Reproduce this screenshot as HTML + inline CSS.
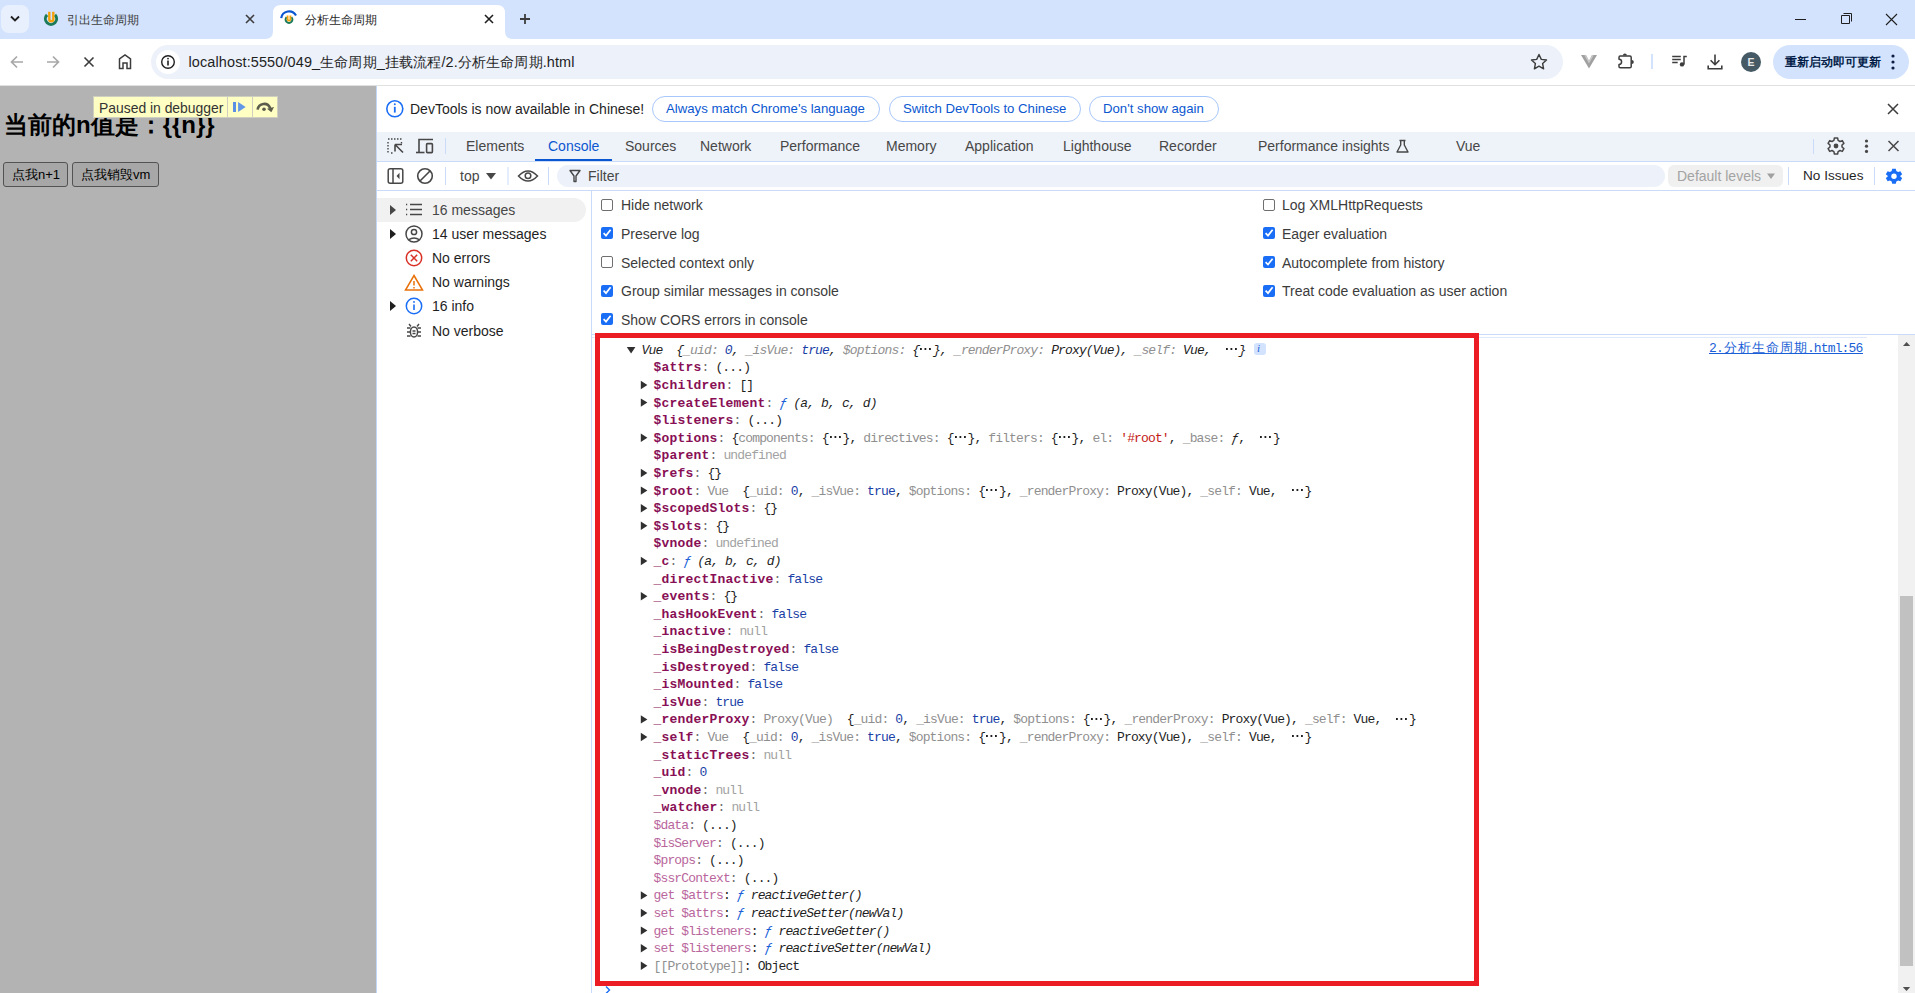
<!DOCTYPE html>
<html><head><meta charset="utf-8">
<style>
*{box-sizing:border-box;margin:0;padding:0}
html,body{width:1915px;height:993px;overflow:hidden;background:#fff;font-family:"Liberation Sans",sans-serif;color:#1f1f1f;position:relative}
.a{position:absolute}
svg{position:absolute;overflow:visible}
.t{position:absolute;white-space:pre;line-height:1}
.ui{font-size:14px;color:#1f1f1f}
.row{position:absolute;white-space:pre;font-family:"Liberation Mono",monospace;font-size:13px;line-height:17.6px;height:17.6px;color:#1f1f1f}
.cj{display:inline-block;width:14px;text-align:center}
</style></head><body>
<!-- ===== TAB STRIP ===== -->
<div class="a" style="left:0;top:0;width:1915px;height:39px;background:#d3e3fd"></div>
<div class="a" style="left:1px;top:5px;width:28px;height:28px;border-radius:8px;background:#e9f0fd"></div>
<svg style="left:0;top:0" width="40" height="40"><path d="M11 16.5 L15 20.5 L19 16.5" fill="none" stroke="#1f1f1f" stroke-width="1.8"/></svg>
<!-- inactive tab favicon -->
<svg style="left:0;top:0" width="70" height="40">
  <path d="M47.04 14.84 A5.6 5.6 0 1 0 54.96 14.84" fill="none" stroke="#1b7a58" stroke-width="3"/>
  <path d="M49.3 11.7 V19.2 A2 2 0 0 0 53.3 19.2 V11.7" fill="none" stroke="#f5a20a" stroke-width="2.4"/>
</svg>
<div class="t" style="left:67px;top:13.5px;font-size:12px;color:#3c3c3c">引出生命周期</div>
<svg style="left:0;top:0" width="300" height="40"><path d="M246 15 L254 23 M254 15 L246 23" stroke="#3c3c3c" stroke-width="1.6"/></svg>
<!-- active tab -->
<svg style="left:0;top:0" width="600" height="40">
  <path d="M265 39 Q273 39 273 31 L273 13 Q273 5 281 5 L497 5 Q505 5 505 13 L505 31 Q505 39 513 39 Z" fill="#fff"/>
  <path d="M281.2 18.2 A7.9 7.9 0 0 1 296 15.6" fill="none" stroke="#0b57d0" stroke-width="2.2"/>
  <path d="M286.6 17.1 A3.4 3.4 0 1 0 291.4 17.1" fill="none" stroke="#1b7a58" stroke-width="2"/>
  <path d="M287.6 15.5 V19.2 A1.4 1.4 0 0 0 290.4 19.2 V15.5" fill="none" stroke="#f5a20a" stroke-width="1.8"/>
  <path d="M485 15 L493 23 M493 15 L485 23" stroke="#1f1f1f" stroke-width="1.6"/>
  <path d="M520 19 L530 19 M525 14 L525 24" stroke="#3c3c3c" stroke-width="1.8"/>
</svg>
<div class="t" style="left:305px;top:13.5px;font-size:12px;color:#1f1f1f">分析生命周期</div>
<!-- window controls -->
<svg style="left:0;top:0" width="1915" height="40">
  <path d="M1795 19.5 H1806" stroke="#1f1f1f" stroke-width="1"/>
  <path d="M1841.5 15.5 H1849.5 V23.5 H1841.5 Z" fill="none" stroke="#1f1f1f" stroke-width="1"/>
  <path d="M1843.5 13.5 H1851.5 V21.5" fill="none" stroke="#1f1f1f" stroke-width="1"/>
  <path d="M1886 14 L1897 25 M1897 14 L1886 25" stroke="#1f1f1f" stroke-width="1.1"/>
</svg>
<!-- ===== TOOLBAR ===== -->
<div class="a" style="left:0;top:39px;width:1915px;height:47px;background:#fff;border-bottom:1px solid #e0e2e0"></div>
<svg style="left:0;top:0" width="160" height="90">
  <path d="M23 62 H12 M17 56.5 L11.5 62 L17 67.5" fill="none" stroke="#a8a8a8" stroke-width="1.7"/>
  <path d="M47 62 H58 M53 56.5 L58.5 62 L53 67.5" fill="none" stroke="#a8a8a8" stroke-width="1.7"/>
  <path d="M84.5 57.5 L93.5 66.5 M93.5 57.5 L84.5 66.5" stroke="#3c3c3c" stroke-width="1.6"/>
  <path d="M119.5 68.5 V59 L125 55 L130.5 59 V68.5 H127 V63 H123 V68.5 Z" fill="none" stroke="#3c3c3c" stroke-width="1.5" stroke-linejoin="miter"/>
</svg>
<div class="a" style="left:151px;top:45px;width:1412px;height:34px;border-radius:17px;background:#ecf1fa"></div>
<div class="a" style="left:156px;top:50px;width:24px;height:24px;border-radius:12px;background:#fff"></div>
<svg style="left:0;top:0" width="200" height="90">
  <circle cx="168" cy="62" r="6.3" fill="none" stroke="#1f1f1f" stroke-width="1.4"/>
  <path d="M168 60.5 V65.5" stroke="#1f1f1f" stroke-width="1.6"/>
  <circle cx="168" cy="58.6" r="0.9" fill="#1f1f1f"/>
</svg>
<div class="t" style="left:188.5px;top:54.5px;font-size:14.45px;letter-spacing:0.13px;color:#1f1f1f">localhost:5550/049_生命周期_挂载流程/2.分析生命周期.html</div>
<svg style="left:0;top:0" width="1915" height="90">
  <path d="M1539 54.5 L1541.3 59.4 L1546.5 60 L1542.6 63.5 L1543.6 68.8 L1539 66.2 L1534.4 68.8 L1535.4 63.5 L1531.5 60 L1536.7 59.4 Z" fill="none" stroke="#3c3c3c" stroke-width="1.4" stroke-linejoin="round"/>
  <path d="M1581 55 H1586 L1589 61 L1592 55 H1597 L1589 68.5 Z" fill="#a0a0a0"/>
  <path d="M1585 55 L1589 62 L1593 55" fill="none" stroke="#c8c8c8" stroke-width="1.5"/>
  <path d="M1620.2 56 H1629.8 Q1631.2 56 1631.2 57.4 V66.4 Q1631.2 67.8 1629.8 67.8 H1620.2 Q1619 67.8 1619 66.4 V64.4 A2.6 2.6 0 0 0 1619 59.2 V57.4 Q1619 56 1620.2 56 Z" fill="none" stroke="#3c3c3c" stroke-width="1.5" stroke-linejoin="round"/>
  <path d="M1622.9 55.4 A2 2 0 0 1 1626.9 55.4 Z" fill="#3c3c3c"/>
  <path d="M1631.8 59.9 A2 2 0 0 1 1631.8 63.9 Z" fill="#3c3c3c"/>
  <path d="M1652 54 V69" stroke="#a8c7fa" stroke-width="1"/>
  <path d="M1672.2 56.6 H1680.8 M1672.2 59.6 H1680.8 M1672.2 62.6 H1677.7" stroke="#3c3c3c" stroke-width="1.5"/>
  <path d="M1684 64.4 V56.6 H1686.8" fill="none" stroke="#3c3c3c" stroke-width="1.5"/>
  <circle cx="1682" cy="64.4" r="2.2" fill="#3c3c3c"/>
  <path d="M1715 54.4 V64.5 M1710.6 60.3 L1715 64.7 L1719.4 60.3 M1708.2 65.5 V68.7 H1721.8 V65.5" fill="none" stroke="#3c3c3c" stroke-width="1.6"/>
  <circle cx="1751" cy="62" r="10" fill="#455a64"/>
</svg>
<div class="t" style="left:1747.5px;top:57px;font-size:10.5px;font-weight:bold;color:#e6e6e6">E</div>
<div class="a" style="left:1773px;top:45px;width:136px;height:34px;border-radius:17px;background:#d3e3fd"></div>
<div class="t" style="left:1785px;top:56px;font-size:12px;font-weight:bold;color:#041e49">重新启动即可更新</div>
<svg style="left:0;top:0" width="1915" height="90">
  <circle cx="1893" cy="56" r="1.6" fill="#0b1d45"/><circle cx="1893" cy="62" r="1.6" fill="#0b1d45"/><circle cx="1893" cy="68" r="1.6" fill="#0b1d45"/>
</svg>
<!-- ===== PAGE (left) ===== -->
<div class="a" style="left:0;top:86px;width:376px;height:907px;background:#b3b3b3"></div>
<div class="t" style="left:4px;top:113px;font-size:24px;font-weight:bold;color:#000">当前的n值是：{{n}}</div>
<div class="a" style="left:3px;top:162px;width:65px;height:25px;border:1px solid #535353;border-radius:3px;background:#a7a7a7"></div>
<div class="t" style="left:12px;top:168px;font-size:13px;color:#000">点我n+1</div>
<div class="a" style="left:72px;top:162px;width:87px;height:25px;border:1px solid #535353;border-radius:3px;background:#a7a7a7"></div>
<div class="t" style="left:81px;top:168px;font-size:13px;color:#000">点我销毁vm</div>
<div class="a" style="left:93px;top:96px;width:185px;height:22px;background:#ffffc4;border:1px solid #cfcfc0"></div>
<div class="a" style="left:227px;top:96px;width:1px;height:22px;background:#cfcfc0"></div>
<div class="a" style="left:252px;top:96px;width:1px;height:22px;background:#cfcfc0"></div>
<div class="t" style="left:99px;top:101.5px;font-size:13.9px;color:#333">Paused in debugger</div>
<svg style="left:0;top:0" width="300" height="130">
  <rect x="233" y="102" width="3" height="10" fill="#5b90e4"/>
  <path d="M238.1 102 L245.6 107 L238.1 112 Z" fill="#6197e6"/>
  <path d="M257.6 109.6 A6.6 6.9 0 0 1 270.2 108.2" fill="none" stroke="#5c5c4c" stroke-width="2.6"/>
  <path d="M267 108.8 L274 107 L271.4 112.2 Z" fill="#5c5c4c"/>
  <circle cx="264" cy="109.3" r="1.8" fill="#5c5c4c"/>
</svg>
<!-- ===== DEVTOOLS ===== -->
<div class="a" style="left:376px;top:86px;width:1539px;height:907px;background:#fff"></div>
<div class="a" style="left:376px;top:86px;width:1px;height:907px;background:#c2d6f7"></div>
<!-- banner -->
<svg style="left:0;top:0" width="420" height="130">
  <circle cx="394.8" cy="108.8" r="8" fill="none" stroke="#1a6ef5" stroke-width="1.6"/>
  <path d="M394.8 106.8 V112.6" stroke="#1a6ef5" stroke-width="1.8"/>
  <circle cx="394.8" cy="104.3" r="1" fill="#1a6ef5"/>
</svg>
<div class="t ui" style="left:410px;top:102px;font-size:14px">DevTools is now available in Chinese!</div>
<div class="a" style="left:652px;top:96px;width:228px;height:26px;border:1px solid #a8c7fa;border-radius:13px"></div>
<div class="t" style="left:666px;top:102px;font-size:13.2px;color:#0b57d0">Always match Chrome's language</div>
<div class="a" style="left:889px;top:96px;width:192px;height:26px;border:1px solid #a8c7fa;border-radius:13px"></div>
<div class="t" style="left:903px;top:102px;font-size:13.2px;color:#0b57d0">Switch DevTools to Chinese</div>
<div class="a" style="left:1089px;top:96px;width:130px;height:26px;border:1px solid #a8c7fa;border-radius:13px"></div>
<div class="t" style="left:1103px;top:102px;font-size:13.2px;color:#0b57d0">Don't show again</div>
<svg style="left:0;top:0" width="1915" height="130"><path d="M1888 104 L1898 114 M1898 104 L1888 114" stroke="#3c3c3c" stroke-width="1.5"/></svg>
<!-- main tab bar -->
<div class="a" style="left:377px;top:132px;width:1538px;height:30px;background:#eef2f9;border-bottom:1px solid #c9dbf8"></div>
<div class="a" style="left:535px;top:159px;width:77px;height:2px;background:#0b57d0"></div>
<div class="t ui" style="left:466px;top:139px;color:#474747">Elements</div>
<div class="t ui" style="left:548px;top:139px;color:#0b57d0">Console</div>
<div class="t ui" style="left:625px;top:139px;color:#474747">Sources</div>
<div class="t ui" style="left:700px;top:139px;color:#474747">Network</div>
<div class="t ui" style="left:780px;top:139px;color:#474747">Performance</div>
<div class="t ui" style="left:886px;top:139px;color:#474747">Memory</div>
<div class="t ui" style="left:965px;top:139px;color:#474747">Application</div>
<div class="t ui" style="left:1063px;top:139px;color:#474747">Lighthouse</div>
<div class="t ui" style="left:1159px;top:139px;color:#474747">Recorder</div>
<div class="t ui" style="left:1258px;top:139px;color:#474747">Performance insights</div>
<div class="t ui" style="left:1456px;top:139px;color:#474747">Vue</div>
<svg style="left:0;top:0" width="1915" height="200">
  <!-- inspect -->
  <path d="M388 139 h1.5 M391 139 h1.5 M394 139 h1.5 M397 139 h1.5 M400 139 h1.5 M388 142 v1.5 M388 145 v1.5 M388 148 v1.5 M388 151 v1.5 M401.5 142 v1.5 M391 153 h1.5" stroke="#474747" stroke-width="1.4"/>
  <path d="M395 144.5 H402 M395 144.5 V151.5 M395.5 145 L403 152.5" fill="none" stroke="#474747" stroke-width="1.6"/>
  <!-- device -->
  <path d="M419 153 V139.5 H433" fill="none" stroke="#474747" stroke-width="1.6"/>
  <path d="M416 152.5 H424.5" stroke="#474747" stroke-width="1.6"/>
  <rect x="426.6" y="143.6" width="5.8" height="9" rx="0.8" fill="none" stroke="#474747" stroke-width="1.6"/>
  <path d="M445.5 138 V154" stroke="#c9dbf8" stroke-width="1"/>
  <!-- flask -->
  <path d="M1399.5 140.5 H1405.5 M1400.7 140.5 V145 L1397 152 H1408 L1404.3 145 V140.5" fill="none" stroke="#474747" stroke-width="1.4" stroke-linejoin="round"/>
  <path d="M1813.5 139 V154" stroke="#c9dbf8" stroke-width="1"/>
  <!-- gear -->
  <g transform="translate(1836,146)">
    <path d="M-1.6 -8 H1.6 L2.1 -5.6 L4 -4.5 L6.3 -5.4 L7.9 -2.6 L6 -1 V1 L7.9 2.6 L6.3 5.4 L4 4.5 L2.1 5.6 L1.6 8 H-1.6 L-2.1 5.6 L-4 4.5 L-6.3 5.4 L-7.9 2.6 L-6 1 V-1 L-7.9 -2.6 L-6.3 -5.4 L-4 -4.5 L-2.1 -5.6 Z" fill="none" stroke="#474747" stroke-width="1.5" stroke-linejoin="round"/>
    <circle cx="0" cy="0" r="2.4" fill="#474747"/>
  </g>
  <circle cx="1866.5" cy="141" r="1.6" fill="#474747"/><circle cx="1866.5" cy="146.2" r="1.6" fill="#474747"/><circle cx="1866.5" cy="151.4" r="1.6" fill="#474747"/>
  <path d="M1888.5 141 L1898.5 151 M1898.5 141 L1888.5 151" stroke="#474747" stroke-width="1.5"/>
</svg>
<!-- console toolbar -->
<div class="a" style="left:557px;top:165px;width:1108px;height:22px;border-radius:11px;background:#edf2fa"></div>
<div class="a" style="left:1668px;top:165px;width:115px;height:22px;border-radius:6px;background:#f0f0f0"></div>
<div class="a" style="left:377px;top:190px;width:1538px;height:1px;background:#c9dbf8"></div>
<svg style="left:0;top:0" width="1915" height="200">
  <rect x="388.2" y="168.7" width="14.6" height="14.6" rx="2" fill="none" stroke="#474747" stroke-width="1.5"/>
  <path d="M393 169 V183" stroke="#474747" stroke-width="1.5"/>
  <path d="M399.5 172.8 L396.5 176 L399.5 179.2 Z" fill="#474747"/>
  <circle cx="425" cy="176" r="7.3" fill="none" stroke="#474747" stroke-width="1.6"/>
  <path d="M430 171 L420 181" stroke="#474747" stroke-width="1.6"/>
  <path d="M445.5 167 V185 M508 167 V185 M548.5 167 V185" stroke="#c9dbf8" stroke-width="1"/>
  <path d="M486 173 H496 L491 179.5 Z" fill="#474747"/>
  <path d="M518.5 176 Q528 166 537.5 176 Q528 186 518.5 176 Z" fill="none" stroke="#474747" stroke-width="1.5"/>
  <circle cx="528" cy="175.8" r="2.8" fill="none" stroke="#474747" stroke-width="1.5"/>
  <path d="M570 170.5 H580 L576 176 V181.5 H574 V176 Z" fill="none" stroke="#474747" stroke-width="1.4" stroke-linejoin="round"/>
  <path d="M1788.5 167 V185 M1874.5 167 V185" stroke="#c9dbf8" stroke-width="1"/>
  <path d="M1767 173.5 H1775 L1771 179 Z" fill="#a0a0a0"/>
</svg>
<div class="t ui" style="left:460px;top:169px;color:#474747">top</div>
<div class="t ui" style="left:588px;top:169px;color:#474747">Filter</div>
<div class="t ui" style="left:1677px;top:169px;color:#a3a3a3">Default levels</div>
<div class="t ui" style="left:1803px;top:169px;font-size:13.6px;color:#1f1f1f">No Issues</div>
<svg style="left:0;top:0" width="1915" height="200">
  <g transform="translate(1894,176.2)">
    <path d="M-2 -8.3 H2 L2.6 -5.8 L4.6 -4.7 L7.1 -5.5 L9.1 -2.1 L7.1 -0.6 V0.6 L9.1 2.1 L7.1 5.5 L4.6 4.7 L2.6 5.8 L2 8.3 H-2 L-2.6 5.8 L-4.6 4.7 L-7.1 5.5 L-9.1 2.1 L-7.1 0.6 V-0.6 L-9.1 -2.1 L-7.1 -5.5 L-4.6 -4.7 L-2.6 -5.8 Z" fill="#1a6ef5" transform="scale(0.9)"/>
    <circle cx="0" cy="0" r="2.7" fill="#fff"/>
  </g>
</svg>
<!-- sidebar -->
<div class="a" style="left:591px;top:191px;width:1px;height:802px;background:#c9dbf8"></div>
<div class="a" style="left:377px;top:198px;width:209px;height:24px;border-radius:0 12px 12px 0;background:#f1f1f1"></div>
<div class="t ui" style="left:432px;top:203px;color:#474747">16 messages</div>
<div class="t ui" style="left:432px;top:227px;color:#1f1f1f">14 user messages</div>
<div class="t ui" style="left:432px;top:251px;color:#1f1f1f">No errors</div>
<div class="t ui" style="left:432px;top:275px;color:#1f1f1f">No warnings</div>
<div class="t ui" style="left:432px;top:299px;color:#1f1f1f">16 info</div>
<div class="t ui" style="left:432px;top:324px;color:#1f1f1f">No verbose</div>
<svg style="left:0;top:0" width="600" height="350">
  <path d="M390 205 L396 210 L390 215 Z" fill="#474747"/>
  <path d="M390 229 L396 234 L390 239 Z" fill="#1f1f1f"/>
  <path d="M390 301 L396 306 L390 311 Z" fill="#1f1f1f"/>
  <path d="M406 204.5 h1.2 M406 209.5 h1.2 M406 214.5 h1.2 M410 204.5 H422 M410 209.5 H422 M410 214.5 H422" stroke="#474747" stroke-width="1.6"/>
  <circle cx="414" cy="234" r="8" fill="none" stroke="#474747" stroke-width="1.5"/>
  <circle cx="414" cy="232" r="2.6" fill="none" stroke="#474747" stroke-width="1.5"/>
  <path d="M408.5 239.8 Q414 236.2 419.5 239.8" fill="none" stroke="#474747" stroke-width="1.5"/>
  <circle cx="414" cy="258" r="7.7" fill="none" stroke="#d93025" stroke-width="1.5"/>
  <path d="M410.8 254.8 L417.2 261.2 M417.2 254.8 L410.8 261.2" stroke="#d93025" stroke-width="1.5"/>
  <path d="M414 275.5 L422.5 290 H405.5 Z" fill="none" stroke="#e8710a" stroke-width="1.5" stroke-linejoin="miter"/>
  <path d="M414 281 V285.5 M414 287 V288.5" stroke="#e8710a" stroke-width="1.5"/>
  <circle cx="414" cy="306" r="7.7" fill="none" stroke="#1a6ef5" stroke-width="1.5"/>
  <path d="M414 304.5 V310" stroke="#1a6ef5" stroke-width="1.6"/>
  <circle cx="414" cy="302" r="0.9" fill="#1a6ef5"/>
  <ellipse cx="414" cy="332" rx="3.6" ry="5" fill="none" stroke="#474747" stroke-width="1.5"/>
  <path d="M412.5 331 h3 M412.5 333.5 h3 M407 328 h3.5 M407 332 h3.5 M407 336 h3.5 M417.5 328 h3.5 M417.5 332 h3.5 M417.5 336 h3.5 M411 326.5 L409 324 M417 326.5 L419 324" stroke="#474747" stroke-width="1.4"/>
</svg>
<div class="a" style="left:601px;top:198.8px;width:12px;height:12px;border-radius:2px;border:1px solid #6f6f6f;background:#fff"></div>
<div class="t ui" style="left:621px;top:198.4px;color:#3c3c3c">Hide network</div>
<div class="a" style="left:601px;top:227px;width:12px;height:12px;border-radius:2px;background:#1a6ef5"></div><svg style="left:0;top:0" width="1" height="1"><path d="M603.6 233.2 L606 235.6 L610.6 229.8" fill="none" stroke="#fff" stroke-width="1.7"/></svg>
<div class="t ui" style="left:621px;top:226.6px;color:#3c3c3c">Preserve log</div>
<div class="a" style="left:601px;top:255.89999999999998px;width:12px;height:12px;border-radius:2px;border:1px solid #6f6f6f;background:#fff"></div>
<div class="t ui" style="left:621px;top:255.5px;color:#3c3c3c">Selected context only</div>
<div class="a" style="left:601px;top:284.5px;width:12px;height:12px;border-radius:2px;background:#1a6ef5"></div><svg style="left:0;top:0" width="1" height="1"><path d="M603.6 290.7 L606 293.1 L610.6 287.3" fill="none" stroke="#fff" stroke-width="1.7"/></svg>
<div class="t ui" style="left:621px;top:284.1px;color:#3c3c3c">Group similar messages in console</div>
<div class="a" style="left:601px;top:313px;width:12px;height:12px;border-radius:2px;background:#1a6ef5"></div><svg style="left:0;top:0" width="1" height="1"><path d="M603.6 319.2 L606 321.6 L610.6 315.8" fill="none" stroke="#fff" stroke-width="1.7"/></svg>
<div class="t ui" style="left:621px;top:312.6px;color:#3c3c3c">Show CORS errors in console</div>
<div class="a" style="left:1263px;top:198.8px;width:12px;height:12px;border-radius:2px;border:1px solid #6f6f6f;background:#fff"></div>
<div class="t ui" style="left:1282px;top:198.4px;color:#3c3c3c">Log XMLHttpRequests</div>
<div class="a" style="left:1263px;top:227px;width:12px;height:12px;border-radius:2px;background:#1a6ef5"></div><svg style="left:0;top:0" width="1" height="1"><path d="M1265.6 233.2 L1268 235.6 L1272.6 229.8" fill="none" stroke="#fff" stroke-width="1.7"/></svg>
<div class="t ui" style="left:1282px;top:226.6px;color:#3c3c3c">Eager evaluation</div>
<div class="a" style="left:1263px;top:255.89999999999998px;width:12px;height:12px;border-radius:2px;background:#1a6ef5"></div><svg style="left:0;top:0" width="1" height="1"><path d="M1265.6 262.09999999999997 L1268 264.5 L1272.6 258.7" fill="none" stroke="#fff" stroke-width="1.7"/></svg>
<div class="t ui" style="left:1282px;top:255.5px;color:#3c3c3c">Autocomplete from history</div>
<div class="a" style="left:1263px;top:284.5px;width:12px;height:12px;border-radius:2px;background:#1a6ef5"></div><svg style="left:0;top:0" width="1" height="1"><path d="M1265.6 290.7 L1268 293.1 L1272.6 287.3" fill="none" stroke="#fff" stroke-width="1.7"/></svg>
<div class="t ui" style="left:1282px;top:284.1px;color:#3c3c3c">Treat code evaluation as user action</div>
<!-- console message area frame -->
<div class="a" style="left:592px;top:334px;width:1323px;height:1px;background:#c9dbf8"></div>
<div class="a" style="left:592px;top:337px;width:1275px;height:1px;background:#dfe9fb"></div>
<div class="a" style="left:1898px;top:335px;width:17px;height:658px;background:#f1f1f1"></div>
<div class="a" style="left:1900px;top:596px;width:13px;height:370px;background:#c1c1c1"></div>
<svg style="left:0;top:0" width="1915" height="993">
  <path d="M1903 346 L1906.6 342 L1910.2 346 Z" fill="#505050"/>
  <path d="M1902.8 987 L1910.2 987 L1906.5 991 Z" fill="#505050"/>
  <path d="M606 986.5 L609.5 990 L606 993.5" fill="none" stroke="#1a6ef5" stroke-width="1.4"/>
</svg>
<div class="row" style="left:1709px;top:340.2px;color:#1a5fd6;letter-spacing:-0.86px">2.<span class="cj">分</span><span class="cj">析</span><span class="cj">生</span><span class="cj">命</span><span class="cj">周</span><span class="cj">期</span>.html:56</div>
<div class="a" style="left:1709px;top:353px;width:154px;height:1px;background:#1a5fd6"></div>
<div class="a" style="left:1254px;top:343px;width:12px;height:12px;border-radius:3px;background:#d3e3fd"></div>
<div class="t" style="left:1257px;top:343px;font-family:'Liberation Serif',serif;font-style:italic;font-size:11px;color:#1a5fd6">i</div>
<div class="a" style="left:595px;top:333px;width:884px;height:653px;border:5px solid #ec1c24"></div>
<div class="row" style="left:641.5px;top:341.70px"><span style="color:#1f1f1f;letter-spacing:-0.860px;font-style:italic">Vue</span><span style="color:#1f1f1f;letter-spacing:-0.860px">  </span><span style="color:#1f1f1f;letter-spacing:-0.860px;font-style:italic">{</span><span style="color:#8f8f8f;letter-spacing:-0.860px;font-style:italic">_uid</span><span style="color:#8f8f8f;letter-spacing:-0.860px;font-style:italic">: </span><span style="color:#1a3fa6;letter-spacing:-0.860px;font-style:italic">0</span><span style="color:#1f1f1f;letter-spacing:-0.860px;font-style:italic">, </span><span style="color:#8f8f8f;letter-spacing:-0.860px;font-style:italic">_isVue: </span><span style="color:#1a3fa6;letter-spacing:-0.860px;font-style:italic">true</span><span style="color:#1f1f1f;letter-spacing:-0.860px;font-style:italic">, </span><span style="color:#8f8f8f;letter-spacing:-0.860px;font-style:italic">$options: </span><span style="color:#1f1f1f;letter-spacing:-0.860px;font-style:italic">{</span><span style="color:#1f1f1f;display:inline-block;width:13.88px;height:17.6px;vertical-align:top;background:linear-gradient(90deg,#1f1f1f 2px,transparent 2px) 1px 6.6px/4.5px 2px repeat-x"></span><span style="color:#1f1f1f;letter-spacing:-0.860px;font-style:italic">}</span><span style="color:#1f1f1f;letter-spacing:-0.860px;font-style:italic">, </span><span style="color:#8f8f8f;letter-spacing:-0.860px;font-style:italic">_renderProxy: </span><span style="color:#1f1f1f;letter-spacing:-0.860px;font-style:italic">Proxy(Vue)</span><span style="color:#1f1f1f;letter-spacing:-0.860px;font-style:italic">, </span><span style="color:#8f8f8f;letter-spacing:-0.860px;font-style:italic">_self: </span><span style="color:#1f1f1f;letter-spacing:-0.860px;font-style:italic">Vue</span><span style="color:#1f1f1f;letter-spacing:-0.860px;font-style:italic">,  </span><span style="color:#1f1f1f;display:inline-block;width:13.88px;height:17.6px;vertical-align:top;background:linear-gradient(90deg,#1f1f1f 2px,transparent 2px) 1px 6.6px/4.5px 2px repeat-x"></span><span style="color:#1f1f1f;letter-spacing:-0.860px;font-style:italic">}</span></div>
<div class="row" style="left:653.5px;top:359.30px"><span style="color:#880f55;letter-spacing:0.200px;font-weight:bold">$attrs</span><span style="color:#6e6e6e;letter-spacing:-0.860px">: </span><span style="color:#1f1f1f;letter-spacing:-0.860px">(...)</span></div>
<div class="row" style="left:653.5px;top:376.90px"><span style="color:#880f55;letter-spacing:0.200px;font-weight:bold">$children</span><span style="color:#6e6e6e;letter-spacing:-0.860px">: </span><span style="color:#1f1f1f;letter-spacing:-0.860px">[]</span></div>
<div class="row" style="left:653.5px;top:394.50px"><span style="color:#880f55;letter-spacing:0.200px;font-weight:bold">$createElement</span><span style="color:#6e6e6e;letter-spacing:-0.860px">: </span><span style="color:#1a5fd6;letter-spacing:-0.860px;font-style:italic">ƒ</span><span style="color:#1f1f1f;letter-spacing:-0.860px;font-style:italic"> (a, b, c, d)</span></div>
<div class="row" style="left:653.5px;top:412.10px"><span style="color:#880f55;letter-spacing:0.200px;font-weight:bold">$listeners</span><span style="color:#6e6e6e;letter-spacing:-0.860px">: </span><span style="color:#1f1f1f;letter-spacing:-0.860px">(...)</span></div>
<div class="row" style="left:653.5px;top:429.70px"><span style="color:#880f55;letter-spacing:0.200px;font-weight:bold">$options</span><span style="color:#6e6e6e;letter-spacing:-0.860px">: </span><span style="color:#1f1f1f;letter-spacing:-0.860px">{</span><span style="color:#8f8f8f;letter-spacing:-0.860px">components: </span><span style="color:#1f1f1f;letter-spacing:-0.860px">{</span><span style="color:#1f1f1f;display:inline-block;width:13.88px;height:17.6px;vertical-align:top;background:linear-gradient(90deg,#1f1f1f 2px,transparent 2px) 1px 6.6px/4.5px 2px repeat-x"></span><span style="color:#1f1f1f;letter-spacing:-0.860px">}</span><span style="color:#1f1f1f;letter-spacing:-0.860px">, </span><span style="color:#8f8f8f;letter-spacing:-0.860px">directives: </span><span style="color:#1f1f1f;letter-spacing:-0.860px">{</span><span style="color:#1f1f1f;display:inline-block;width:13.88px;height:17.6px;vertical-align:top;background:linear-gradient(90deg,#1f1f1f 2px,transparent 2px) 1px 6.6px/4.5px 2px repeat-x"></span><span style="color:#1f1f1f;letter-spacing:-0.860px">}</span><span style="color:#1f1f1f;letter-spacing:-0.860px">, </span><span style="color:#8f8f8f;letter-spacing:-0.860px">filters: </span><span style="color:#1f1f1f;letter-spacing:-0.860px">{</span><span style="color:#1f1f1f;display:inline-block;width:13.88px;height:17.6px;vertical-align:top;background:linear-gradient(90deg,#1f1f1f 2px,transparent 2px) 1px 6.6px/4.5px 2px repeat-x"></span><span style="color:#1f1f1f;letter-spacing:-0.860px">}</span><span style="color:#1f1f1f;letter-spacing:-0.860px">, </span><span style="color:#8f8f8f;letter-spacing:-0.860px">el: </span><span style="color:#c41a16;letter-spacing:-0.860px">&#x27;#root&#x27;</span><span style="color:#1f1f1f;letter-spacing:-0.860px">, </span><span style="color:#8f8f8f;letter-spacing:-0.860px">_base: </span><span style="color:#1f1f1f;letter-spacing:-0.860px;font-style:italic">ƒ</span><span style="color:#1f1f1f;letter-spacing:-0.860px">,  </span><span style="color:#1f1f1f;display:inline-block;width:13.88px;height:17.6px;vertical-align:top;background:linear-gradient(90deg,#1f1f1f 2px,transparent 2px) 1px 6.6px/4.5px 2px repeat-x"></span><span style="color:#1f1f1f;letter-spacing:-0.860px">}</span></div>
<div class="row" style="left:653.5px;top:447.30px"><span style="color:#880f55;letter-spacing:0.200px;font-weight:bold">$parent</span><span style="color:#6e6e6e;letter-spacing:-0.860px">: </span><span style="color:#a2a2a2;letter-spacing:-0.860px">undefined</span></div>
<div class="row" style="left:653.5px;top:464.90px"><span style="color:#880f55;letter-spacing:0.200px;font-weight:bold">$refs</span><span style="color:#6e6e6e;letter-spacing:-0.860px">: </span><span style="color:#1f1f1f;letter-spacing:-0.860px">{}</span></div>
<div class="row" style="left:653.5px;top:482.50px"><span style="color:#880f55;letter-spacing:0.200px;font-weight:bold">$root</span><span style="color:#6e6e6e;letter-spacing:-0.860px">: </span><span style="color:#8f8f8f;letter-spacing:-0.860px">Vue</span><span style="color:#1f1f1f;letter-spacing:-0.860px">  </span><span style="color:#1f1f1f;letter-spacing:-0.860px">{</span><span style="color:#8f8f8f;letter-spacing:-0.860px">_uid</span><span style="color:#8f8f8f;letter-spacing:-0.860px">: </span><span style="color:#1a3fa6;letter-spacing:-0.860px">0</span><span style="color:#1f1f1f;letter-spacing:-0.860px">, </span><span style="color:#8f8f8f;letter-spacing:-0.860px">_isVue: </span><span style="color:#1a3fa6;letter-spacing:-0.860px">true</span><span style="color:#1f1f1f;letter-spacing:-0.860px">, </span><span style="color:#8f8f8f;letter-spacing:-0.860px">$options: </span><span style="color:#1f1f1f;letter-spacing:-0.860px">{</span><span style="color:#1f1f1f;display:inline-block;width:13.88px;height:17.6px;vertical-align:top;background:linear-gradient(90deg,#1f1f1f 2px,transparent 2px) 1px 6.6px/4.5px 2px repeat-x"></span><span style="color:#1f1f1f;letter-spacing:-0.860px">}</span><span style="color:#1f1f1f;letter-spacing:-0.860px">, </span><span style="color:#8f8f8f;letter-spacing:-0.860px">_renderProxy: </span><span style="color:#1f1f1f;letter-spacing:-0.860px">Proxy(Vue)</span><span style="color:#1f1f1f;letter-spacing:-0.860px">, </span><span style="color:#8f8f8f;letter-spacing:-0.860px">_self: </span><span style="color:#1f1f1f;letter-spacing:-0.860px">Vue</span><span style="color:#1f1f1f;letter-spacing:-0.860px">,  </span><span style="color:#1f1f1f;display:inline-block;width:13.88px;height:17.6px;vertical-align:top;background:linear-gradient(90deg,#1f1f1f 2px,transparent 2px) 1px 6.6px/4.5px 2px repeat-x"></span><span style="color:#1f1f1f;letter-spacing:-0.860px">}</span></div>
<div class="row" style="left:653.5px;top:500.10px"><span style="color:#880f55;letter-spacing:0.200px;font-weight:bold">$scopedSlots</span><span style="color:#6e6e6e;letter-spacing:-0.860px">: </span><span style="color:#1f1f1f;letter-spacing:-0.860px">{}</span></div>
<div class="row" style="left:653.5px;top:517.70px"><span style="color:#880f55;letter-spacing:0.200px;font-weight:bold">$slots</span><span style="color:#6e6e6e;letter-spacing:-0.860px">: </span><span style="color:#1f1f1f;letter-spacing:-0.860px">{}</span></div>
<div class="row" style="left:653.5px;top:535.30px"><span style="color:#880f55;letter-spacing:0.200px;font-weight:bold">$vnode</span><span style="color:#6e6e6e;letter-spacing:-0.860px">: </span><span style="color:#a2a2a2;letter-spacing:-0.860px">undefined</span></div>
<div class="row" style="left:653.5px;top:552.90px"><span style="color:#880f55;letter-spacing:0.200px;font-weight:bold">_c</span><span style="color:#6e6e6e;letter-spacing:-0.860px">: </span><span style="color:#1a5fd6;letter-spacing:-0.860px;font-style:italic">ƒ</span><span style="color:#1f1f1f;letter-spacing:-0.860px;font-style:italic"> (a, b, c, d)</span></div>
<div class="row" style="left:653.5px;top:570.50px"><span style="color:#880f55;letter-spacing:0.200px;font-weight:bold">_directInactive</span><span style="color:#6e6e6e;letter-spacing:-0.860px">: </span><span style="color:#1a3fa6;letter-spacing:-0.860px">false</span></div>
<div class="row" style="left:653.5px;top:588.10px"><span style="color:#880f55;letter-spacing:0.200px;font-weight:bold">_events</span><span style="color:#6e6e6e;letter-spacing:-0.860px">: </span><span style="color:#1f1f1f;letter-spacing:-0.860px">{}</span></div>
<div class="row" style="left:653.5px;top:605.70px"><span style="color:#880f55;letter-spacing:0.200px;font-weight:bold">_hasHookEvent</span><span style="color:#6e6e6e;letter-spacing:-0.860px">: </span><span style="color:#1a3fa6;letter-spacing:-0.860px">false</span></div>
<div class="row" style="left:653.5px;top:623.30px"><span style="color:#880f55;letter-spacing:0.200px;font-weight:bold">_inactive</span><span style="color:#6e6e6e;letter-spacing:-0.860px">: </span><span style="color:#a2a2a2;letter-spacing:-0.860px">null</span></div>
<div class="row" style="left:653.5px;top:640.90px"><span style="color:#880f55;letter-spacing:0.200px;font-weight:bold">_isBeingDestroyed</span><span style="color:#6e6e6e;letter-spacing:-0.860px">: </span><span style="color:#1a3fa6;letter-spacing:-0.860px">false</span></div>
<div class="row" style="left:653.5px;top:658.50px"><span style="color:#880f55;letter-spacing:0.200px;font-weight:bold">_isDestroyed</span><span style="color:#6e6e6e;letter-spacing:-0.860px">: </span><span style="color:#1a3fa6;letter-spacing:-0.860px">false</span></div>
<div class="row" style="left:653.5px;top:676.10px"><span style="color:#880f55;letter-spacing:0.200px;font-weight:bold">_isMounted</span><span style="color:#6e6e6e;letter-spacing:-0.860px">: </span><span style="color:#1a3fa6;letter-spacing:-0.860px">false</span></div>
<div class="row" style="left:653.5px;top:693.70px"><span style="color:#880f55;letter-spacing:0.200px;font-weight:bold">_isVue</span><span style="color:#6e6e6e;letter-spacing:-0.860px">: </span><span style="color:#1a3fa6;letter-spacing:-0.860px">true</span></div>
<div class="row" style="left:653.5px;top:711.30px"><span style="color:#880f55;letter-spacing:0.200px;font-weight:bold">_renderProxy</span><span style="color:#6e6e6e;letter-spacing:-0.860px">: </span><span style="color:#8f8f8f;letter-spacing:-0.860px">Proxy(Vue)</span><span style="color:#1f1f1f;letter-spacing:-0.860px">  </span><span style="color:#1f1f1f;letter-spacing:-0.860px">{</span><span style="color:#8f8f8f;letter-spacing:-0.860px">_uid</span><span style="color:#8f8f8f;letter-spacing:-0.860px">: </span><span style="color:#1a3fa6;letter-spacing:-0.860px">0</span><span style="color:#1f1f1f;letter-spacing:-0.860px">, </span><span style="color:#8f8f8f;letter-spacing:-0.860px">_isVue: </span><span style="color:#1a3fa6;letter-spacing:-0.860px">true</span><span style="color:#1f1f1f;letter-spacing:-0.860px">, </span><span style="color:#8f8f8f;letter-spacing:-0.860px">$options: </span><span style="color:#1f1f1f;letter-spacing:-0.860px">{</span><span style="color:#1f1f1f;display:inline-block;width:13.88px;height:17.6px;vertical-align:top;background:linear-gradient(90deg,#1f1f1f 2px,transparent 2px) 1px 6.6px/4.5px 2px repeat-x"></span><span style="color:#1f1f1f;letter-spacing:-0.860px">}</span><span style="color:#1f1f1f;letter-spacing:-0.860px">, </span><span style="color:#8f8f8f;letter-spacing:-0.860px">_renderProxy: </span><span style="color:#1f1f1f;letter-spacing:-0.860px">Proxy(Vue)</span><span style="color:#1f1f1f;letter-spacing:-0.860px">, </span><span style="color:#8f8f8f;letter-spacing:-0.860px">_self: </span><span style="color:#1f1f1f;letter-spacing:-0.860px">Vue</span><span style="color:#1f1f1f;letter-spacing:-0.860px">,  </span><span style="color:#1f1f1f;display:inline-block;width:13.88px;height:17.6px;vertical-align:top;background:linear-gradient(90deg,#1f1f1f 2px,transparent 2px) 1px 6.6px/4.5px 2px repeat-x"></span><span style="color:#1f1f1f;letter-spacing:-0.860px">}</span></div>
<div class="row" style="left:653.5px;top:728.90px"><span style="color:#880f55;letter-spacing:0.200px;font-weight:bold">_self</span><span style="color:#6e6e6e;letter-spacing:-0.860px">: </span><span style="color:#8f8f8f;letter-spacing:-0.860px">Vue</span><span style="color:#1f1f1f;letter-spacing:-0.860px">  </span><span style="color:#1f1f1f;letter-spacing:-0.860px">{</span><span style="color:#8f8f8f;letter-spacing:-0.860px">_uid</span><span style="color:#8f8f8f;letter-spacing:-0.860px">: </span><span style="color:#1a3fa6;letter-spacing:-0.860px">0</span><span style="color:#1f1f1f;letter-spacing:-0.860px">, </span><span style="color:#8f8f8f;letter-spacing:-0.860px">_isVue: </span><span style="color:#1a3fa6;letter-spacing:-0.860px">true</span><span style="color:#1f1f1f;letter-spacing:-0.860px">, </span><span style="color:#8f8f8f;letter-spacing:-0.860px">$options: </span><span style="color:#1f1f1f;letter-spacing:-0.860px">{</span><span style="color:#1f1f1f;display:inline-block;width:13.88px;height:17.6px;vertical-align:top;background:linear-gradient(90deg,#1f1f1f 2px,transparent 2px) 1px 6.6px/4.5px 2px repeat-x"></span><span style="color:#1f1f1f;letter-spacing:-0.860px">}</span><span style="color:#1f1f1f;letter-spacing:-0.860px">, </span><span style="color:#8f8f8f;letter-spacing:-0.860px">_renderProxy: </span><span style="color:#1f1f1f;letter-spacing:-0.860px">Proxy(Vue)</span><span style="color:#1f1f1f;letter-spacing:-0.860px">, </span><span style="color:#8f8f8f;letter-spacing:-0.860px">_self: </span><span style="color:#1f1f1f;letter-spacing:-0.860px">Vue</span><span style="color:#1f1f1f;letter-spacing:-0.860px">,  </span><span style="color:#1f1f1f;display:inline-block;width:13.88px;height:17.6px;vertical-align:top;background:linear-gradient(90deg,#1f1f1f 2px,transparent 2px) 1px 6.6px/4.5px 2px repeat-x"></span><span style="color:#1f1f1f;letter-spacing:-0.860px">}</span></div>
<div class="row" style="left:653.5px;top:746.50px"><span style="color:#880f55;letter-spacing:0.200px;font-weight:bold">_staticTrees</span><span style="color:#6e6e6e;letter-spacing:-0.860px">: </span><span style="color:#a2a2a2;letter-spacing:-0.860px">null</span></div>
<div class="row" style="left:653.5px;top:764.10px"><span style="color:#880f55;letter-spacing:0.200px;font-weight:bold">_uid</span><span style="color:#6e6e6e;letter-spacing:-0.860px">: </span><span style="color:#1a3fa6;letter-spacing:-0.860px">0</span></div>
<div class="row" style="left:653.5px;top:781.70px"><span style="color:#880f55;letter-spacing:0.200px;font-weight:bold">_vnode</span><span style="color:#6e6e6e;letter-spacing:-0.860px">: </span><span style="color:#a2a2a2;letter-spacing:-0.860px">null</span></div>
<div class="row" style="left:653.5px;top:799.30px"><span style="color:#880f55;letter-spacing:0.200px;font-weight:bold">_watcher</span><span style="color:#6e6e6e;letter-spacing:-0.860px">: </span><span style="color:#a2a2a2;letter-spacing:-0.860px">null</span></div>
<div class="row" style="left:653.5px;top:816.90px"><span style="color:#b9669c;letter-spacing:-0.860px">$data</span><span style="color:#6e6e6e;letter-spacing:-0.860px">: </span><span style="color:#1f1f1f;letter-spacing:-0.860px">(...)</span></div>
<div class="row" style="left:653.5px;top:834.50px"><span style="color:#b9669c;letter-spacing:-0.860px">$isServer</span><span style="color:#6e6e6e;letter-spacing:-0.860px">: </span><span style="color:#1f1f1f;letter-spacing:-0.860px">(...)</span></div>
<div class="row" style="left:653.5px;top:852.10px"><span style="color:#b9669c;letter-spacing:-0.860px">$props</span><span style="color:#6e6e6e;letter-spacing:-0.860px">: </span><span style="color:#1f1f1f;letter-spacing:-0.860px">(...)</span></div>
<div class="row" style="left:653.5px;top:869.70px"><span style="color:#b9669c;letter-spacing:-0.860px">$ssrContext</span><span style="color:#6e6e6e;letter-spacing:-0.860px">: </span><span style="color:#1f1f1f;letter-spacing:-0.860px">(...)</span></div>
<div class="row" style="left:653.5px;top:887.30px"><span style="color:#b9669c;letter-spacing:-0.860px">get $attrs</span><span style="color:#1f1f1f;letter-spacing:-0.860px">: </span><span style="color:#1a5fd6;letter-spacing:-0.860px;font-style:italic">ƒ</span><span style="color:#1f1f1f;letter-spacing:-0.860px;font-style:italic"> reactiveGetter()</span></div>
<div class="row" style="left:653.5px;top:904.90px"><span style="color:#b9669c;letter-spacing:-0.860px">set $attrs</span><span style="color:#1f1f1f;letter-spacing:-0.860px">: </span><span style="color:#1a5fd6;letter-spacing:-0.860px;font-style:italic">ƒ</span><span style="color:#1f1f1f;letter-spacing:-0.860px;font-style:italic"> reactiveSetter(newVal)</span></div>
<div class="row" style="left:653.5px;top:922.50px"><span style="color:#b9669c;letter-spacing:-0.860px">get $listeners</span><span style="color:#1f1f1f;letter-spacing:-0.860px">: </span><span style="color:#1a5fd6;letter-spacing:-0.860px;font-style:italic">ƒ</span><span style="color:#1f1f1f;letter-spacing:-0.860px;font-style:italic"> reactiveGetter()</span></div>
<div class="row" style="left:653.5px;top:940.10px"><span style="color:#b9669c;letter-spacing:-0.860px">set $listeners</span><span style="color:#1f1f1f;letter-spacing:-0.860px">: </span><span style="color:#1a5fd6;letter-spacing:-0.860px;font-style:italic">ƒ</span><span style="color:#1f1f1f;letter-spacing:-0.860px;font-style:italic"> reactiveSetter(newVal)</span></div>
<div class="row" style="left:653.5px;top:957.70px"><span style="color:#8f8f8f;letter-spacing:-0.860px">[[Prototype]]</span><span style="color:#1f1f1f;letter-spacing:-0.860px">: </span><span style="color:#1f1f1f;letter-spacing:-0.860px">Object</span></div>
<svg style="left:0;top:0" width="700" height="993"><path d="M626.8 347.00 H635.4 L631.1 353.50 Z" fill="#303030"/><path d="M640.8 380.80 L647.4 385.00 L640.8 389.20 Z" fill="#303030"/><path d="M640.8 398.40 L647.4 402.60 L640.8 406.80 Z" fill="#303030"/><path d="M640.8 433.60 L647.4 437.80 L640.8 442.00 Z" fill="#303030"/><path d="M640.8 468.80 L647.4 473.00 L640.8 477.20 Z" fill="#303030"/><path d="M640.8 486.40 L647.4 490.60 L640.8 494.80 Z" fill="#303030"/><path d="M640.8 504.00 L647.4 508.20 L640.8 512.40 Z" fill="#303030"/><path d="M640.8 521.60 L647.4 525.80 L640.8 530.00 Z" fill="#303030"/><path d="M640.8 556.80 L647.4 561.00 L640.8 565.20 Z" fill="#303030"/><path d="M640.8 592.00 L647.4 596.20 L640.8 600.40 Z" fill="#303030"/><path d="M640.8 715.20 L647.4 719.40 L640.8 723.60 Z" fill="#303030"/><path d="M640.8 732.80 L647.4 737.00 L640.8 741.20 Z" fill="#303030"/><path d="M640.8 891.20 L647.4 895.40 L640.8 899.60 Z" fill="#303030"/><path d="M640.8 908.80 L647.4 913.00 L640.8 917.20 Z" fill="#303030"/><path d="M640.8 926.40 L647.4 930.60 L640.8 934.80 Z" fill="#303030"/><path d="M640.8 944.00 L647.4 948.20 L640.8 952.40 Z" fill="#303030"/><path d="M640.8 961.60 L647.4 965.80 L640.8 970.00 Z" fill="#303030"/></svg>
</body></html>
